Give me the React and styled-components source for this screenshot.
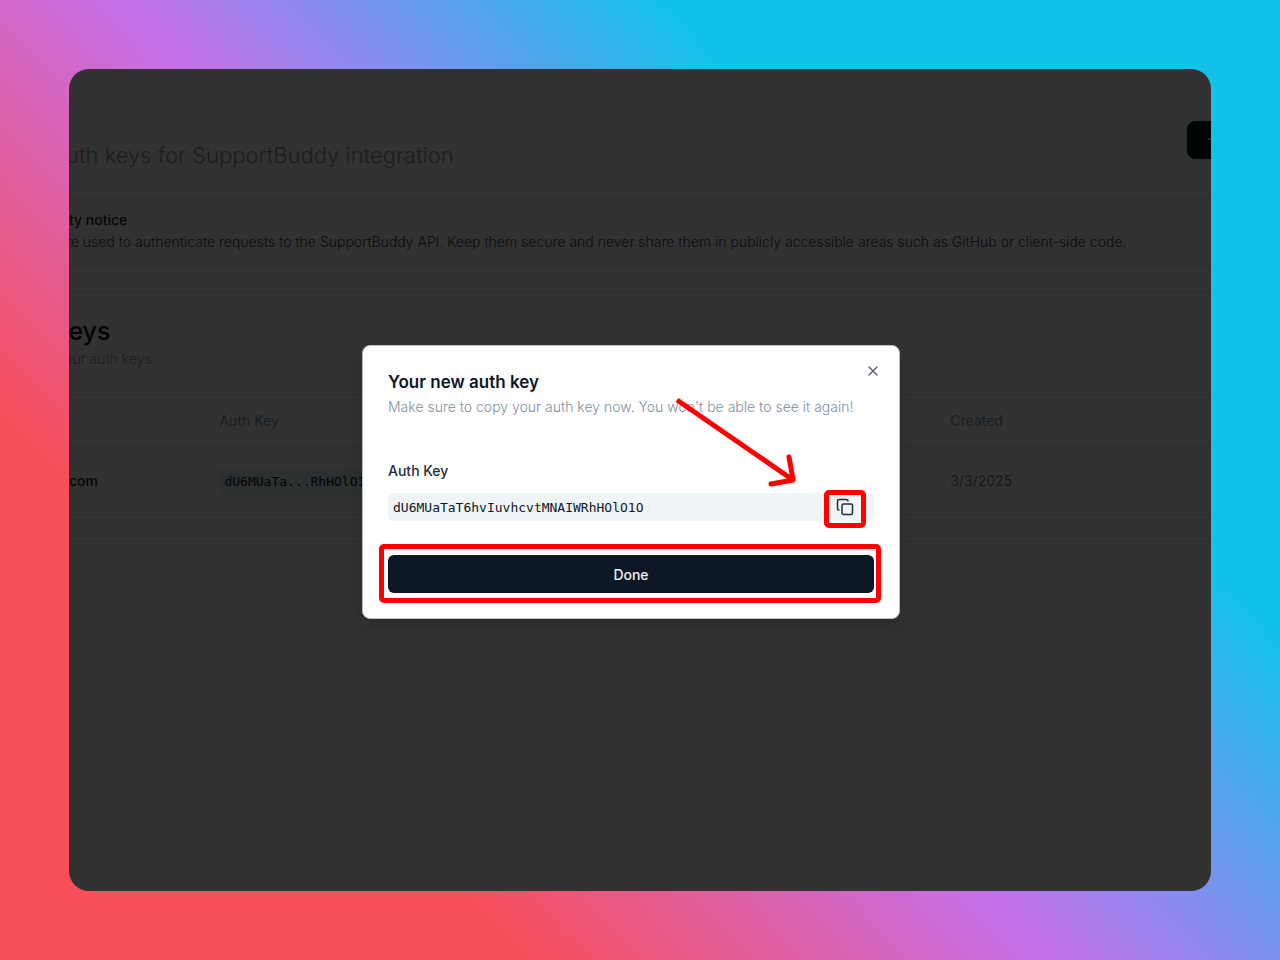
import React from "react";
import styled, { createGlobalStyle } from "styled-components";
import { Copy, Plus, X } from "lucide-react";

const keys = [
  { id: 1, name: "com", masked: "dU6MUaTa...RhHOlO1O", created: "3/3/2025" },
];

const App = () => {
  return (
    <>
      <GlobalStyle />
      <StBackdrop>
        <StWindow>
          <StHeader>
            <StSubtitle>uth keys for SupportBuddy integration</StSubtitle>
            <StCreateBtn aria-label="Create">
              <Plus size={16} />
            </StCreateBtn>
          </StHeader>

          <StNotice>
            <StNoticeTitle>ty notice</StNoticeTitle>
            <StNoticeText>
              re used to authenticate requests to the SupportBuddy API. Keep them secure and never share them in publicly accessible areas such as GitHub or client-side code.
            </StNoticeText>
          </StNotice>

          <StCard>
            <StCardTitle>keys</StCardTitle>
            <StCardText>our auth keys</StCardText>
            <StTable>
              <thead>
                <tr>
                  <StTh $width="13%"></StTh>
                  <StTh $width="64%">Auth Key</StTh>
                  <StTh>Created</StTh>
                </tr>
              </thead>
              <tbody>
                {keys.map((item) => (
                  <tr key={item.id}>
                    <StTd $strong>{item.name}</StTd>
                    <StTd>
                      <StCode>{item.masked}</StCode>
                    </StTd>
                    <StTd>{item.created}</StTd>
                  </tr>
                ))}
              </tbody>
            </StTable>
          </StCard>

          <StOverlay>
            <StDialog role="dialog" aria-labelledby="dialog-title">
              <StCloseBtn aria-label="Close">
                <X size={16} />
              </StCloseBtn>
              <StDialogTitle id="dialog-title">Your new auth key</StDialogTitle>
              <StDialogText>
                Make sure to copy your auth key now. You won't be able to see it again!
              </StDialogText>
              <StLabel htmlFor="auth-key">Auth Key</StLabel>
              <StField>
                <StKeyInput id="auth-key" readOnly defaultValue="dU6MUaTaT6hvIuvhcvtMNAIWRhHOlO1O" />
                <StCopyBtn aria-label="Copy">
                  <Copy size={18} strokeWidth={2} />
                </StCopyBtn>
              </StField>
              <StDoneBtn>Done</StDoneBtn>
              <StArrow viewBox="0 0 126 94" aria-hidden="true">
                <path d="M4 4 L120 84" />
                <path d="M116 61 L120 84 L98 88" strokeLinecap="round" strokeLinejoin="round" />
              </StArrow>
            </StDialog>
          </StOverlay>
        </StWindow>
      </StBackdrop>
    </>
  );
};

export default App;

const GlobalStyle = createGlobalStyle`
  * {
    box-sizing: border-box;
  }
  body {
    margin: 0;
    font-family: Inter, "Liberation Sans", sans-serif;
  }
  h1, h2, h3, p {
    margin: 0;
  }
  button, input {
    font-family: inherit;
    border: none;
    padding: 0;
  }
`;

const StBackdrop = styled.div`
  display: flex;
  min-height: 100vh;
  padding: 69px;
  background: linear-gradient(46deg, #f84f5b 24%, #c471ed 48%, #12c2eb 72%);
`;

const StWindow = styled.main`
  position: relative;
  flex: 1;
  min-width: 0;
  overflow: hidden;
  border-radius: 20px;
  background-color: #323232;
  white-space: nowrap;
`;

const StHeader = styled.header`
  display: flex;
  justify-content: space-between;
  align-items: flex-start;
  padding-top: 52px;
  height: 129px;
`;

const StSubtitle = styled.p`
  margin: 18px 0 0 -3px;
  font-size: 22px;
  line-height: 32px;
  font-weight: 300;
  color: #191d21;
`;

const StCreateBtn = styled.button`
  flex: none;
  width: 24px;
  height: 38px;
  padding-left: 18px;
  overflow: hidden;
  border-radius: 8px 0 0 8px;
  background-color: #010405;
  color: #303132;
`;

const StNotice = styled.section`
  height: 67px;
  padding-top: 10px;
  border-top: 1px solid #2b2b2c;
  border-bottom: 1px solid #2d2d2e;
`;

const StNoticeTitle = styled.h3`
  font-size: 14px;
  line-height: 22px;
  font-weight: 500;
  color: #050607;
`;

const StNoticeText = styled.p`
  margin-left: -3px;
  font-size: 14px;
  line-height: 22px;
  font-weight: 300;
  color: #0a0c0e;
`;

const StCard = styled.section`
  margin-top: 26px;
  padding: 22px 0 26px;
  border-top: 1px solid #2b2b2c;
  border-bottom: 1px solid #2b2b2c;
`;

const StCardTitle = styled.h2`
  margin-left: -14px;
  font-size: 25px;
  line-height: 34px;
  font-weight: 500;
  color: #020304;
`;

const StCardText = styled.p`
  margin-left: -5px;
  font-size: 14px;
  line-height: 22px;
  font-weight: 300;
  color: #191d21;
`;

const StTable = styled.table`
  width: 100%;
  margin-top: 24px;
  border-collapse: collapse;
  table-layout: fixed;
  font-size: 14px;
`;

const StTh = styled.th`
  width: ${(props) => props.$width || "auto"};
  height: 52px;
  padding: 0 0 0 2px;
  border-top: 1px solid #2b2b2c;
  border-bottom: 1px solid #2b2b2c;
  text-align: left;
  font-weight: 400;
  color: #191d21;
`;

const StTd = styled.td`
  height: 68px;
  padding: 0 0 0 ${(props) => (props.$strong ? "0" : "2px")};
  border-bottom: 1px solid #2b2b2c;
  font-weight: ${(props) => (props.$strong ? 500 : 400)};
  color: ${(props) => (props.$strong ? "#030405" : "#14181b")};
`;

const StCode = styled.code`
  padding: 6px 5px;
  border-radius: 4px;
  background-color: #2d3031;
  font-family: "DejaVu Sans Mono", monospace;
  font-size: 13px;
  color: #020304;
`;

const StOverlay = styled.div`
  position: absolute;
  inset: 0;
  display: flex;
  justify-content: center;
  align-items: center;
  padding: 4px 18px 0 0;
`;

const StDialog = styled.div`
  position: relative;
  display: flex;
  flex-direction: column;
  width: 100%;
  max-width: 538px;
  padding: 24px 25px 25px;
  border: 1px solid #b9bdc2;
  border-radius: 8px;
  background-color: #ffffff;
  box-shadow: 0 8px 16px rgba(0, 0, 0, 0.15);
`;

const StCloseBtn = styled.button`
  position: absolute;
  top: 17px;
  right: 18px;
  width: 16px;
  height: 16px;
  background: none;
  color: #5b6068;
`;

const StDialogTitle = styled.h2`
  font-size: 17px;
  line-height: 24px;
  font-weight: 600;
  color: #0f1726;
`;

const StDialogText = styled.p`
  font-size: 14px;
  line-height: 26px;
  font-weight: 300;
  color: #8290a3;
`;

const StLabel = styled.label`
  margin-top: 40px;
  font-size: 14px;
  line-height: 22px;
  font-weight: 500;
  color: #262d3a;
`;

const StField = styled.div`
  display: flex;
  align-items: center;
  height: 28px;
  margin-top: 11px;
  padding: 0 8px 0 5px;
  border-radius: 6px;
  background-color: #eff4f7;
`;

const StKeyInput = styled.input`
  flex: 1;
  min-width: 0;
  background: none;
  outline: none;
  font-family: "DejaVu Sans Mono", monospace;
  font-size: 13px;
  color: #0f1726;
`;

/* 빨간 테두리로 강조되는 버튼 */
const StMarkedBtn = styled.button`
  position: relative;
  display: flex;
  justify-content: center;
  align-items: center;

  &::after {
    content: "";
    position: absolute;
    border: 5px solid #ff0000;
    border-radius: 5px;
  }
`;

const StCopyBtn = styled(StMarkedBtn)`
  width: 42px;
  height: 28px;
  background: none;
  color: #262d3a;

  &::after {
    inset: -3px 0 -7px;
  }
`;

const StDoneBtn = styled(StMarkedBtn)`
  height: 38px;
  margin-top: 34px;
  border-radius: 6px;
  background-color: #0d1625;
  font-size: 14px;
  font-weight: 500;
  color: #eef1f5;

  &::after {
    inset: -11px -7px -10px -9px;
  }
`;

const StArrow = styled.svg`
  position: absolute;
  top: 50px;
  left: 310px;
  width: 126px;
  height: 94px;
  pointer-events: none;
  fill: none;
  stroke: #ff0000;
  stroke-width: 5px;
`;
